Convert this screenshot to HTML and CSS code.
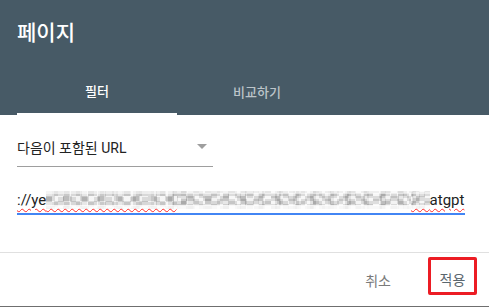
FILE: index.html
```html
<!DOCTYPE html>
<html lang="ko">
<head>
<meta charset="utf-8">
<link rel="stylesheet" href="styles.css">
</head>
<body>
<div class="dialog">
  <header class="header">
    <h1 class="title">페이지</h1>
    <nav class="tabs">
      <div class="tab active">필터</div>
      <div class="tab">비교하기</div>
    </nav>
  </header>
  <main class="content">
    <div class="select">
      <span class="select-label">다음이 포함된 URL</span>
      <span class="arrow"></span>
    </div>
    <div class="input">
      <span class="typo">://ye<span class="blur b1">&nbsp;&nbsp;&nbsp;&nbsp;&nbsp;&nbsp;&nbsp;&nbsp;&nbsp;&nbsp;&nbsp;&nbsp;&nbsp;&nbsp;&nbsp;&nbsp;&nbsp;&nbsp;&nbsp;&nbsp;&nbsp;&nbsp;&nbsp;&nbsp;&nbsp;&nbsp;&nbsp;&nbsp;&nbsp;&nbsp;&nbsp;&nbsp;&nbsp;&nbsp;&nbsp;</span></span><span class="blur b2">&nbsp;&nbsp;&nbsp;&nbsp;&nbsp;&nbsp;&nbsp;&nbsp;&nbsp;&nbsp;&nbsp;&nbsp;&nbsp;&nbsp;&nbsp;&nbsp;&nbsp;&nbsp;&nbsp;&nbsp;&nbsp;&nbsp;&nbsp;&nbsp;&nbsp;&nbsp;&nbsp;&nbsp;&nbsp;&nbsp;&nbsp;&nbsp;&nbsp;&nbsp;&nbsp;&nbsp;&nbsp;&nbsp;&nbsp;&nbsp;&nbsp;&nbsp;&nbsp;&nbsp;&nbsp;&nbsp;&nbsp;&nbsp;&nbsp;&nbsp;&nbsp;&nbsp;&nbsp;&nbsp;&nbsp;&nbsp;&nbsp;&nbsp;&nbsp;&nbsp;&nbsp;&nbsp;&nbsp;</span><span class="typo"><span class="blur b3">&nbsp;&nbsp;&nbsp;&nbsp;&nbsp;</span>atgpt</span>
    </div>
  </main>
  <footer class="footer">
    <button class="btn cancel">취소</button>
    <button class="btn apply">적용</button>
  </footer>
</div>
</body>
</html>
```
FILE: styles.css
```css
html, body {
  margin: 0;
  padding: 0;
  background: #fff;
}
.dialog {
  width: 489px;
  height: 307px;
  box-sizing: border-box;
  border-bottom: 1px solid #6f6f6f;
  font-family: Roboto, "Noto Sans CJK KR", sans-serif;
  display: flex;
  flex-direction: column;
}
.header {
  background: #475a66;
  padding: 21px 0 0 17px;
  height: 115px;
  box-sizing: border-box;
  display: flex;
  flex-direction: column;
}
.title {
  margin: 0;
  font-size: 21px;
  line-height: 24px;
  font-weight: 500;
  color: #fff;
  height: 45px;
}
.tabs {
  display: flex;
  height: 49px;
}
.tab {
  width: 160px;
  display: flex;
  align-items: center;
  justify-content: center;
  font-size: 13px;
  font-weight: 500;
  color: #bcc4c9;
  box-sizing: border-box;
  padding-top: 1px;
}
.tab.active {
  color: #fff;
  border-bottom: 2px solid #fff;
}
.content {
  padding: 0 24px 0 17px;
  flex: 1;
  display: flex;
  flex-direction: column;
}
.select {
  width: 196px;
  height: 52px;
  box-sizing: border-box;
  border-bottom: 1px solid #9e9e9e;
  display: flex;
  align-items: center;
  justify-content: space-between;
  padding-top: 12px;
}
.select-label {
  font-size: 14px;
  color: #222;
}
.arrow {
  width: 0;
  height: 0;
  border-left: 5px solid transparent;
  border-right: 5px solid transparent;
  border-top: 5px solid #9e9e9e;
  margin-right: 6px;
}
.input {
  margin-top: 17px;
  width: 448px;
  height: 31px;
  box-sizing: border-box;
  border-bottom: 2px solid #4285f4;
  display: flex;
  align-items: center;
  font-size: 15px;
  color: #222;
  white-space: nowrap;
  overflow: hidden;
  padding-top: 2px;
}
.typo {
  text-decoration: underline wavy #ff2a2a;
  text-decoration-thickness: 1px;
  text-underline-offset: 3px;
}
.blur {
  background-color: #ededed;
  background-image:
    linear-gradient(180deg, rgba(255,255,255,0.55) 0 3px, rgba(255,255,255,0) 3px 14px, rgba(255,255,255,0.8) 14px 100%),
    repeating-conic-gradient(rgba(0,0,0,0.10) 0 25%, rgba(0,0,0,0) 0 50%),
    repeating-conic-gradient(rgba(0,0,0,0.09) 0 25%, rgba(255,255,255,0.35) 0 50%),
    repeating-linear-gradient(90deg, rgba(0,0,0,0.08) 0 6px, rgba(255,255,255,0.25) 6px 17px, rgba(0,0,0,0.12) 17px 23px, rgba(255,255,255,0) 23px 35px);
  background-size: 100% 100%, 12px 11px, 17px 10px, auto;
}
.b2 {
  background-position: 0 0, 4px 2px, 9px 0, 11px 0;
}
.b3 {
  background-position: 0 0, 2px 1px, 5px 0, 3px 0;
}
.footer {
  height: 54px;
  box-sizing: border-box;
  border-top: 1px solid #e0e0e0;
  display: flex;
  justify-content: flex-end;
  align-items: center;
  padding-right: 12px;
  gap: 37px;
}
.btn {
  background: none;
  border: 0;
  font-family: Roboto, "Noto Sans CJK KR", sans-serif;
  font-size: 14px;
  padding: 0;
  cursor: pointer;
}
.cancel {
  color: #7a7a7a;
}
.apply {
  color: #5a666e;
  border: 3px solid #ec1c24;
  border-radius: 2px;
  width: 49px;
  height: 38px;
  box-sizing: border-box;
  padding-top: 6px;
  margin-bottom: 8px;
}
```
